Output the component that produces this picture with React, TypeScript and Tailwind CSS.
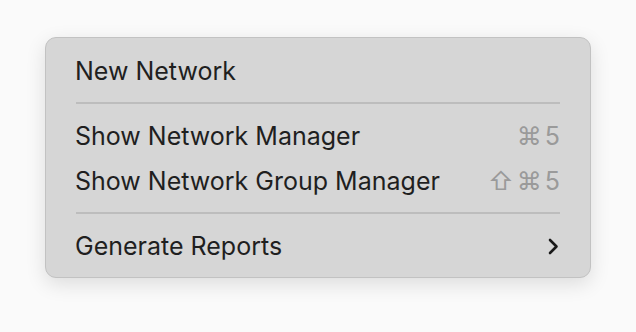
const Separator = () => <div className="mx-[30px] h-[2px] bg-[#bdbdbd] mt-[8px] mb-[10px]" />;

const Item = ({ label, right }: { label: string; right?: React.ReactNode }) => (
  <div className="flex items-center justify-between pl-[29px] pr-[30px] h-[45px]">
    <span className="text-[#1f1f1f]">{label}</span>
    {right}
  </div>
);

const Shortcut = ({ keys }: { keys: string[] }) => (
  <span className="flex items-center gap-[3px] text-[#9a9a9a]">
    {keys.map((k) => (
      <span key={k}>{k}</span>
    ))}
  </span>
);

export default function App() {
  return (
    <div className="w-[636px] h-[332px] bg-[#fafafa] pt-[37px] pl-[45px] font-['Inter',sans-serif] text-[25px]">
      <div className="w-[546px] h-[241px] rounded-[11px] bg-[#d6d6d6] border border-[#c2c2c2] shadow-[0_6px_20px_rgba(0,0,0,0.12)] pt-[11px] pb-[8px]">
        <Item label="New Network" />
        <Separator />
        <Item label="Show Network Manager" right={<Shortcut keys={["⌘", "5"]} />} />
        <Item label="Show Network Group Manager" right={<Shortcut keys={["⇧", "⌘", "5"]} />} />
        <Separator />
        <Item
          label="Generate Reports"
          right={
            <svg width="12" height="17" viewBox="0 0 12 17" className="mr-[1px]">
              <path d="M3 2l6.5 6.5L3 15" fill="none" stroke="#1a1a1a" strokeWidth="2.6" strokeLinecap="round" strokeLinejoin="round" />
            </svg>
          }
        />
      </div>
    </div>
  );
}
